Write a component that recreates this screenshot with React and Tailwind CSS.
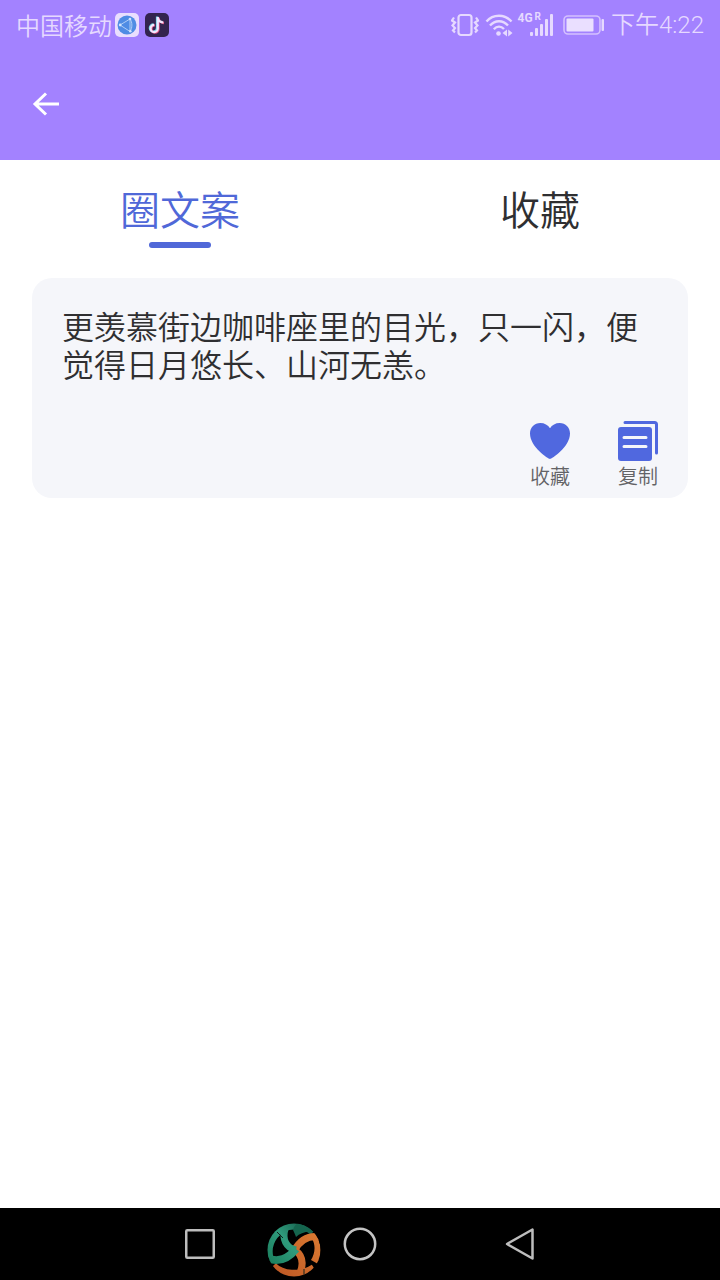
import React, { useState } from 'react';

const TABS = ['圈文案', '收藏'];

const BrowserIcon = () => (
    <svg className="w-6 h-6" viewBox="0 0 24 24" fill="none">
        <rect width="24" height="24" rx="5" fill="#e9defe" />
        <circle cx="12" cy="12" r="9.5" fill="#4f8ce4" />
        <path d="M5 12 15 6V18.500ZM15 6C17.500 9 17.500 15 15 18.500" stroke="#b9d4f8" strokeWidth="0.9" />
        <circle cx="5.200" cy="12" r="1.400" fill="#d3e4fc" />
        <circle cx="15" cy="6" r="1.300" fill="#d3e4fc" />
        <circle cx="15.300" cy="18.300" r="1.300" fill="#d3e4fc" />
    </svg>
);

const MusicIcon = () => {
    const note = 'M12.800 4V15.500A3.600 3.600 0 1 1 9.200 11.900M12.800 4C13 7.300 15 9.300 18.300 9.500';
    return (
        <svg className="w-6 h-6" viewBox="0 0 24 24" fill="none">
            <rect width="24" height="24" rx="5" fill="#33244f" />
            <path d={note} stroke="#6fd3e6" strokeWidth="2.4" transform="translate(-0.7 -0.4)" />
            <path d={note} stroke="#e0507f" strokeWidth="2.4" transform="translate(0.7 0.5)" />
            <path d={note} stroke="#f1e8ff" strokeWidth="2.2" />
        </svg>
    );
};

const VibrateIcon = () => (
    <svg className="w-7 h-6" viewBox="0 0 28 24" fill="none" stroke="#e6d9ff" strokeWidth="2.200">
        <rect x="7.500" y="2" width="13" height="20" rx="2.500" />
        <path d="M3 4.500 1 7.500 4 9.500 1.500 12.500 4 15 2 17.500 4 19.500M25 4.500 27 7.500 24 9.500 26.500 12.500 24 15 26 17.500 24 19.500" />
    </svg>
);

const WifiIcon = () => (
    <svg className="w-7 h-6" viewBox="0 0 28 24" fill="none" stroke="#e6d9ff" strokeWidth="2.400">
        <path d="M1.500 8.500C8 .8 20 .8 26.500 8.500M5 12.500C10 6.800 18 6.800 23 12.500M8.800 16.200C12 12.800 16 12.800 19 16" />
        <circle cx="13.500" cy="20.500" r="2.300" fill="#e6d9ff" stroke="none" />
        <path d="M22 16.500V23.500L17.500 20ZM23.200 16.500V23.500L27.500 20Z" fill="#e6d9ff" stroke="none" />
    </svg>
);

const SignalIcon = () => (
    <svg className="w-6 h-6" viewBox="0 0 24 24" fill="#e6d9ff">
        <rect x="1" y="19" width="3" height="4" rx="1" />
        <rect x="6" y="15" width="3" height="8" rx="1" />
        <rect x="11" y="11" width="3" height="12" rx="1" />
        <rect x="16" y="6" width="3" height="17" rx="1" />
        <rect x="21" y="1" width="3" height="22" rx="1" />
    </svg>
);

const BatteryIcon = () => (
    <svg className="w-11 h-6" viewBox="0 0 44 24" fill="none">
        <rect x="1" y="3" width="36" height="18" rx="4" stroke="#d5c1ff" strokeWidth="1.600" />
        <rect x="3.500" y="5.500" width="27" height="13" rx="1" fill="#eadfff" />
        <rect x="38.500" y="6" width="2.500" height="12" rx="1" fill="#e6d9ff" />
    </svg>
);

const StatusBar = () => (
    <div className="h-12 pl-4 pr-4 pt-0.5 flex items-center justify-between text-2xl font-[350] text-[#e6d9ff]">
        <div className="flex items-center">
            <span className="mr-[3px]">中国移动</span>
            <BrowserIcon />
            <span className="ml-1.5">
                <MusicIcon />
            </span>
        </div>
        <div className="flex items-center">
            <VibrateIcon />
            <span className="ml-1.5">
                <WifiIcon />
            </span>
            <div className="relative ml-4">
                <SignalIcon />
                <span className="absolute right-3 -top-px flex gap-0.5 font-['Roboto'] font-bold leading-none">
                    <span className="text-[12px]">4G</span>
                    <span className="text-[10px]">R</span>
                </span>
            </div>
            <span className="ml-2.5">
                <BatteryIcon />
            </span>
            <span className="ml-1 font-['Roboto','Noto_Sans_CJK_SC',sans-serif]">下午4:22</span>
        </div>
    </div>
);

const HeartIcon = () => (
    <svg className="w-11 h-11" viewBox="0 0 44 44" fill="#5068df">
        <path d="M22 41C20.500 41 2 29 2 15.500C2 9.500 6.500 5 12.300 5C16.500 5 20 7 22 10.300C24 7 27.500 5 31.700 5C37.500 5 42 9.500 42 15.500C42 29 23.500 41 22 41Z" />
    </svg>
);

const CopyIcon = () => (
    <svg className="w-11 h-11" viewBox="0 0 44 44" fill="none">
        <path d="M9 4.500H38.500Q40.500 4.500 40.500 6.500V35" stroke="#5068df" strokeWidth="3" strokeLinecap="round" />
        <rect x="2" y="9" width="34" height="34" rx="3" fill="#5068df" />
        <path d="M8 19.500H30M8 28.500H30" stroke="#f5f6fa" strokeWidth="3" strokeLinecap="round" />
    </svg>
);

const Action = ({ icon, label }) => (
    <button className="w-11 flex flex-col items-center gap-0.5 text-xl leading-6 font-[350] text-[#636366]">
        {icon}
        <span className="whitespace-nowrap">{label}</span>
    </button>
);

const BallIcon = () => (
    <svg className="w-14 h-14" viewBox="0 0 56 56" fill="none">
        <defs>
            <clipPath id="ball">
                <circle cx="28" cy="28" r="26.500" />
            </clipPath>
            <linearGradient id="green" gradientUnits="userSpaceOnUse" x1="4" y1="44" x2="48" y2="6">
                <stop offset="0" stopColor="#1a7d5c" />
                <stop offset="0.500" stopColor="#2f9b7c" />
                <stop offset="1" stopColor="#125443" />
            </linearGradient>
            <linearGradient id="orange" gradientUnits="userSpaceOnUse" x1="10" y1="54" x2="52" y2="16">
                <stop offset="0" stopColor="#bd5825" />
                <stop offset="1" stopColor="#d97831" />
            </linearGradient>
        </defs>
        <g clipPath="url(#ball)">
            <path d="M4 36C0 20 12 4 28 4C36 3 42 6 47 10" stroke="url(#green)" strokeWidth="7" />
            <path d="M27 8C28 3 32 1 36 0L48 10C40 9 34 11 30 15C29 12 28 10 27 8Z" fill="#15654e" />
            <path d="M7 44C16 53 34 55 48 46" stroke="url(#orange)" strokeWidth="8" />
            <path d="M29 28C36 33 38 41 34 51" stroke="url(#orange)" strokeWidth="7" />
            <path d="M28 29C34 18 42 13 54 15" stroke="url(#orange)" strokeWidth="7" />
            <path d="M49 13C56 20 56 32 52 42L45 38C49 32 50 23 46 17Z" fill="url(#orange)" />
            <path d="M19 7C16 17 20 26 30 28" stroke="url(#green)" strokeWidth="7" />
            <path d="M0 36C13 41 22 37 30 27" stroke="url(#green)" strokeWidth="8" />
            <path d="M11 10 17 16M38 47V54" stroke="#10231c" />
        </g>
    </svg>
);

const NavBar = () => (
    <nav className="relative h-18 bg-black flex justify-center">
        <button className="w-40 flex items-center justify-center" aria-label="最近">
            <svg className="w-9 h-9" viewBox="0 0 36 36" fill="none" stroke="#bdbdbd" strokeWidth="2.500">
                <rect x="4.250" y="4.250" width="27.500" height="27.500" rx="1" />
            </svg>
        </button>
        <button className="w-40 flex items-center justify-center" aria-label="主页">
            <svg className="w-9 h-9" viewBox="0 0 36 36" fill="none" stroke="#c4c4c4" strokeWidth="2.500">
                <circle cx="18" cy="18" r="15.200" />
            </svg>
        </button>
        <button className="w-40 flex items-center justify-center" aria-label="返回">
            <svg className="w-9 h-9" viewBox="0 0 36 36" fill="none" stroke="#bdbdbd" strokeWidth="2.500" strokeLinejoin="round">
                <path d="M30.500 3.500V32.500L5 18Z" />
            </svg>
        </button>
        <div className="absolute right-1/2 bottom-0.5 mr-[38px]">
            <BallIcon />
        </div>
    </nav>
);

const App = () => {
    const [tab, setTab] = useState(0);

    return (
        <div className="min-h-screen flex flex-col bg-white font-['Noto_Sans_CJK_SC',sans-serif]">
            <header className="bg-[#a382ff]">
                <StatusBar />
                <div className="h-28 px-7 flex items-center">
                    <button aria-label="返回">
                        <svg className="w-9 h-9" viewBox="0 0 36 36" fill="none" stroke="#fff" strokeWidth="3">
                            <path d="M31 18H7M18 7.500 7 18 18 28.500" />
                        </svg>
                    </button>
                </div>
            </header>

            <div className="pt-6 grid grid-cols-2 justify-items-center">
                {TABS.map((name, i) => (
                    <button
                        key={name}
                        onClick={() => setTab(i)}
                        className={`flex flex-col items-center justify-start gap-2.5 text-[40px] leading-[48px] font-[350] ${tab === i ? 'text-[#5068d8]' : 'text-[#2f2f31]'}`}
                    >
                        {name}
                        {tab === i && <span className="w-[62px] h-1.5 rounded-full bg-[#5068d8]" />}
                    </button>
                ))}
            </div>

            <main className="grow px-8 pt-[30px]">
                <article className="rounded-[20px] bg-[#f5f6fa] pt-7 px-[30px] pb-2.5">
                    <p className="text-[32px] leading-[38px] font-[350] text-[#2f2f31]">
                        更羡慕街边咖啡座里的目光，只一闪，便觉得日月悠长、山河无恙。
                    </p>
                    <div className="mt-9 -mr-0.5 flex justify-end gap-11">
                        <Action icon={<HeartIcon />} label="收藏" />
                        <Action icon={<CopyIcon />} label="复制" />
                    </div>
                </article>
            </main>

            <NavBar />
        </div>
    );
};

export default App;
